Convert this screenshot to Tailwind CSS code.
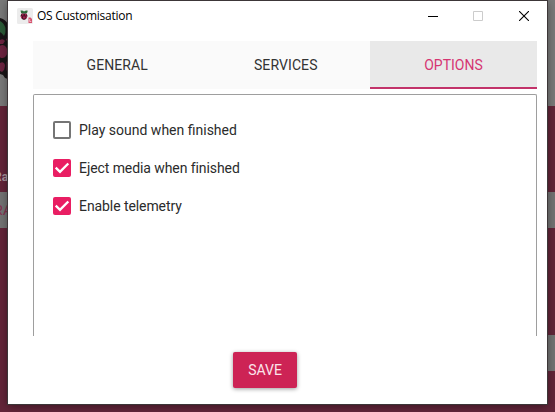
<!DOCTYPE html>
<html lang="en">
<head>
<meta charset="utf-8">
<title>OS Customisation</title>
<script src="https://cdn.jsdelivr.net/npm/@tailwindcss/browser@4"></script>
</head>
<body class="relative h-[412px] w-[555px] overflow-hidden bg-[#632539] font-[Roboto,sans-serif]">
  <!-- Dimmed main window behind the dialog -->
  <div class="absolute inset-0 flex flex-col" aria-hidden="true">
    <div class="relative h-[106px] bg-[#797979]">
      <svg class="absolute left-0 top-[17px]" width="8" height="64" viewBox="0 0 8 64">
        <path d="M0 1Q5 2 8 7V62L5 61L3 58L0 57Z" fill="#191517"/>
        <path d="M0 4Q4 6 5.500 11Q6 16 4 19Q2 16 0 15Z" fill="#2b5a37"/>
        <path d="M0 23Q3 21 5 24L3 27H0Z" fill="#6c2340"/>
        <path d="M6 22L8 21V27Z" fill="#6c2340"/>
        <ellipse cx="2.500" cy="34.500" rx="5" ry="6.500" fill="#6c2340"/>
        <path d="M0 46Q4 44 5 48Q5 53 2 55L0 54Z" fill="#6c2340"/>
        <path d="M6.500 45L8 43V56L6.500 53Z" fill="#6c2340"/>
      </svg>
    </div>
    <div class="flex h-[86px] items-end overflow-hidden pb-[9px]">
      <div class="-ml-[6px] text-[12px] leading-[12px] font-bold text-[#a8959b]">Ra</div>
    </div>
    <div class="flex h-9 items-center overflow-hidden bg-[#737373]">
      <div class="-ml-[7px] font-['Liberation_Sans',sans-serif] text-sm text-[#85314f]">RA</div>
    </div>
    <div class="flex h-[107px]"></div>
    <div class="ml-auto h-9 w-10 bg-[#737373]"></div>
  </div>

  <!-- Dialog -->
  <div class="absolute left-[8px] top-px flex h-[403px] w-[539px] flex-col bg-white shadow-[0_0_0_1px_#3c3638,0_2px_9px_rgba(0,0,0,0.45)]">
    <header class="flex h-[30px] shrink-0 items-center">
      <svg class="ml-[9px]" width="16" height="16" viewBox="0 0 16 16">
        <rect width="16" height="16" rx="1.500" fill="#ececec"/>
        <path d="M3.500 2.500Q6 2 7 3.500Q9 2 10.500 2.500Q11 5 8.500 5.500H5.500Q3.500 5 3.500 2.500Z" fill="#2d6b3b"/>
        <path d="M4.500 5.500H9.500L10.500 8Q10 11 7 12Q4 11 3.500 8Z" fill="#4b1228"/>
        <path d="M5 6H6.500V7.500H5ZM8 6H9.500V7.500H8ZM6 8.500H8.500V10.500H6ZM4 8H5V10H4ZM9.300 8H10V10H9.300Z" fill="#a52450"/>
        <path d="M11.500 9.500H13.500L15 11V15H11.500Z" fill="#d6506c"/>
        <path d="M12.700 11V13.500H14.300" fill="none" stroke="#f7ccd5" stroke-width=".8"/>
      </svg>
      <h1 class="ml-1 w-[110px] whitespace-nowrap font-['Open_Sans','Noto_Sans',sans-serif] text-[12px] leading-4 tracking-[-0.27px] text-black">OS Customisation</h1>
      <div class="ml-auto flex items-center">
        <svg width="11" height="11" viewBox="0 0 11 11" class="mr-[34px]"><path d="M0 5.500H10" stroke="#000"/></svg>
        <svg width="10" height="10" viewBox="0 0 10 10" class="mr-[36px]"><path d="M.5.5H9.500V9.500H.5Z" fill="none" stroke="#ccc"/></svg>
        <svg width="10" height="10" viewBox="0 0 10 10" class="mr-[18px]"><path d="M0 0L10 10M10 0L0 10" stroke="#000" stroke-width="1.100"/></svg>
      </div>
    </header>

    <nav class="ml-[25px] mr-[10px] mt-[10px] flex h-12 shrink-0 text-sm text-[#333]">
      <div class="flex flex-1 items-center justify-center bg-[#fafafa] tracking-[0.1px]">GENERAL</div>
      <div class="flex flex-1 items-center justify-center bg-[#fafafa] tracking-[0.1px]">SERVICES</div>
      <div class="flex w-[167px] items-center justify-center border-b-2 border-[#c2336a] bg-[#e9e9e9] pt-0.5 text-[#d63572]">OPTIONS</div>
    </nav>

    <main class="ml-[25px] mr-[10px] mt-[5px] flex h-[242px] shrink-0 flex-col gap-5 rounded-t-[2px] border border-b-0 border-[#9e9e9e] pl-[19px] pt-[26px] text-sm text-[#2b2b2b]">
      <label class="flex h-[18px] items-center gap-2">
        <span class="size-[18px] rounded-[2px] border-2 border-[#757575]"></span>
        <span>Play sound when finished</span>
      </label>
      <label class="flex h-[18px] items-center gap-2">
        <svg width="18" height="18" viewBox="0 0 18 18"><rect width="18" height="18" rx="2" fill="#e91e63"/><path d="M2.700 8.700L7 12.800L15.300 4.500" fill="none" stroke="#fff" stroke-width="2.400"/></svg>
        <span class="tracking-[-0.08px]">Eject media when finished</span>
      </label>
      <label class="flex h-[18px] items-center gap-2">
        <svg width="18" height="18" viewBox="0 0 18 18"><rect width="18" height="18" rx="2" fill="#e91e63"/><path d="M2.700 8.700L7 12.800L15.300 4.500" fill="none" stroke="#fff" stroke-width="2.400"/></svg>
        <span class="tracking-[-0.08px]">Enable telemetry</span>
      </label>
    </main>

    <footer class="flex pl-[225px] pt-4">
      <button class="h-9 w-16 rounded-[2px] bg-[#cd2355] text-sm text-[#fbe3ea] shadow-[0_1px_4px_rgba(0,0,0,0.4)]">SAVE</button>
    </footer>
  </div>
</body>
</html>
